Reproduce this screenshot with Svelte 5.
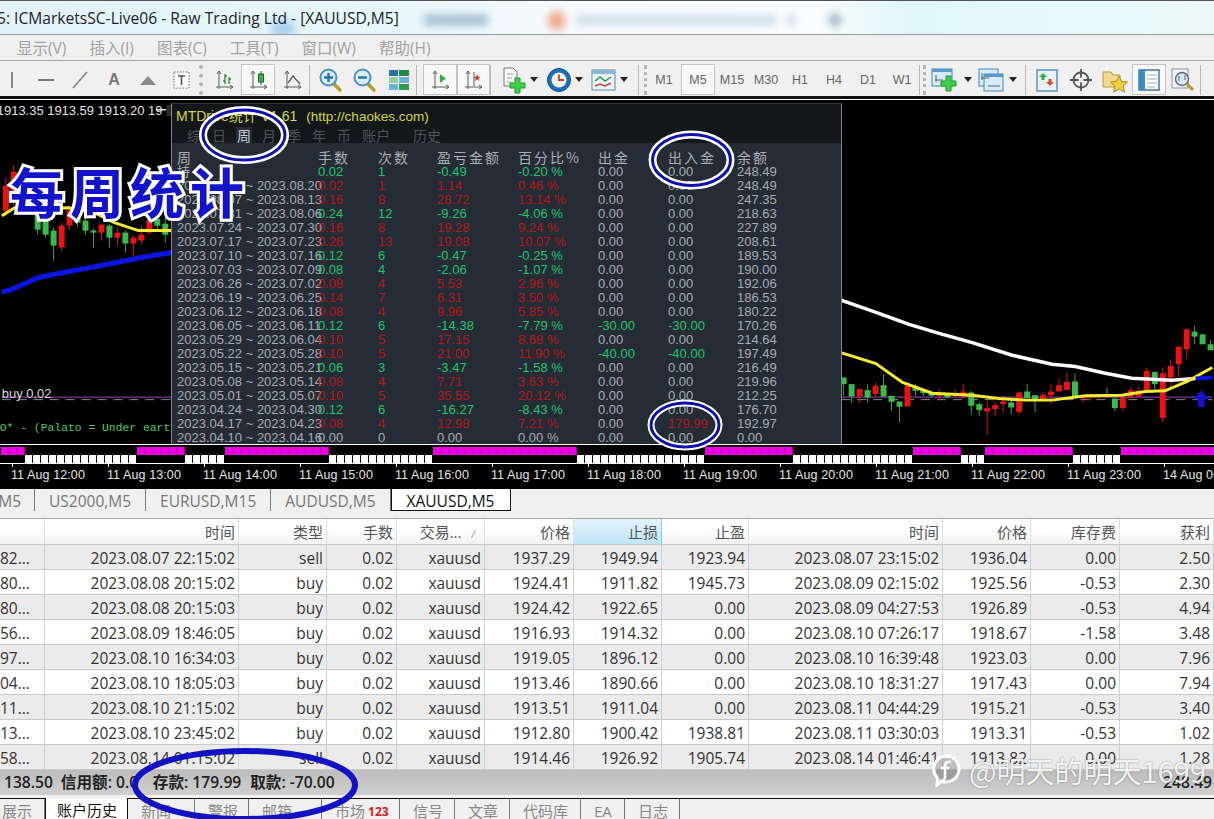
<script>
  const menus = ['显示(V)', '插入(I)', '图表(C)', '工具(T)', '窗口(W)', '帮助(H)'];
  const periods = ['M1', 'M5', 'M15', 'M30', 'H1', 'H4', 'D1', 'W1'];

  // candles on the left of the panel, page coordinates: x, colour, body top/bottom, wick top/bottom
  const leftCandles = [
    [4, 'r', 186, 211, 178, 216], [12, 'r', 172, 200, 165, 206], [36, 'g', 215, 230, 208, 235],
    [44, 'g', 220, 235, 212, 238], [52, 'g', 231, 246, 228, 261], [60, 'r', 226, 248, 223, 251],
    [68, 'r', 211, 226, 206, 230], [76, 'g', 215, 223, 210, 227], [84, 'g', 221, 231, 218, 235],
    [92, 'g', 231, 233, 229, 248], [100, 'r', 225, 233, 224, 241], [108, 'g', 226, 238, 224, 248],
    [116, 'r', 233, 238, 228, 246], [124, 'g', 233, 244, 231, 253], [132, 'r', 238, 244, 236, 256],
    [140, 'r', 235, 241, 226, 245], [148, 'r', 220, 233, 218, 235], [156, 'g', 219, 226, 216, 230],
    [164, 'g', 224, 235, 215, 243]
  ];

  // candles right of the panel, measured on the 3x crop of x=840 y=270
  const rightRaw = [
    [13, 'g', 325, 345, 325, 380], [37, 'g', 345, 382, 345, 402], [61, 'r', 360, 382, 360, 400],
    [85, 'g', 363, 385, 345, 400], [109, 'r', 350, 375, 340, 385], [133, 'g', 348, 382, 315, 385],
    [157, 'g', 380, 398, 380, 425], [181, 'g', 397, 413, 397, 460], [205, 'r', 350, 412, 345, 412],
    [229, 'g', 352, 365, 345, 382], [253, 'g', 362, 372, 362, 380], [277, 'g', 372, 380, 368, 384],
    [301, 'r', 378, 380, 360, 395], [325, 'g', 375, 385, 375, 388], [349, 'r', 375, 380, 362, 385],
    [373, 'r', 367, 382, 345, 385], [397, 'g', 370, 410, 366, 437], [421, 'g', 405, 423, 400, 440],
    [445, 'r', 417, 427, 395, 497], [469, 'r', 408, 420, 400, 440], [493, 'r', 397, 405, 380, 430],
    [517, 'g', 400, 415, 395, 435], [541, 'r', 370, 428, 366, 435], [565, 'g', 367, 387, 345, 387],
    [589, 'g', 378, 390, 378, 430], [613, 'r', 377, 390, 370, 390], [637, 'r', 367, 378, 345, 405],
    [661, 'r', 348, 367, 328, 367], [685, 'r', 338, 362, 310, 362], [709, 'g', 337, 382, 313, 382],
    [733, 'r', 385, 388, 385, 400], [757, 'r', 382, 385, 382, 395], [781, 'r', 378, 382, 378, 390],
    [805, 'g', 378, 380, 355, 382], [829, 'g', 388, 417, 388, 425], [853, 'r', 385, 417, 385, 425],
    [877, 'r', 363, 385, 353, 385], [901, 'r', 365, 382, 352, 385], [925, 'r', 305, 365, 295, 365],
    [949, 'g', 308, 345, 308, 360], [973, 'r', 312, 447, 295, 460], [997, 'r', 290, 325, 270, 360],
    [1021, 'r', 232, 285, 232, 325], [1045, 'r', 180, 240, 175, 268], [1069, 'g', 187, 202, 170, 225],
    [1093, 'g', 195, 225, 195, 225], [1117, 'g', 225, 243, 212, 243]
  ];
  const rightCandles = rightRaw.map(([x, c, a, b, d, e]) => [
    840 + x / 3, c, 270 + a / 3, 270 + b / 3, 270 + d / 3, 270 + e / 3
  ]);
  const candles = [...leftCandles, ...rightCandles];

  const crop = (pts) => pts.map(([x, y]) => `${840 + x / 3},${270 + y / 3}`).join(' ');
  const whiteLine = crop([[5, 92], [100, 125], [210, 165], [300, 192], [400, 220], [520, 258], [640, 285], [710, 292], [800, 312], [880, 327], [1000, 333], [1072, 328]]);
  const yellowRight = crop([[5, 250], [110, 283], [190, 340], [280, 372], [400, 378], [480, 388], [560, 393], [640, 393], [740, 380], [850, 378], [920, 367], [980, 365], [1050, 335], [1122, 295]]);
  const blueEnd = crop([[1072, 328], [1122, 325]]);

  // pink and white activity strip
  const pinkRanges = [[0, 24], [137, 185], [225, 329], [433, 577], [705, 793], [913, 961], [985, 1073], [1121, 1220]];
  const cells = Array.from({ length: 152 }, (_, k) => {
    const x = 1 + 8 * k;
    return pinkRanges.some(([a, b]) => x >= a && x < b);
  });

  const hours = ['11 Aug 12:00', '11 Aug 13:00', '11 Aug 14:00', '11 Aug 15:00', '11 Aug 16:00', '11 Aug 17:00', '11 Aug 18:00', '11 Aug 19:00', '11 Aug 20:00', '11 Aug 21:00', '11 Aug 22:00', '11 Aug 23:00', '14 Aug 00:00'];

  const panelHead = ['周', '手数', '次数', '盈亏金额', '百分比%', '出金', '出入金', '余额'];
  const g = 'g', r = 'r';
  const weeks = [
    ['持', '0.02', '1', '-0.49', '-0.20 %', '0.00', '0.00', '248.49', g],
    ['2023.08.14 ~ 2023.08.20', '0.02', '1', '1.14', '0.46 %', '0.00', '0.00', '248.49', r],
    ['2023.08.07 ~ 2023.08.13', '0.16', '8', '28.72', '13.14 %', '0.00', '0.00', '247.35', r],
    ['2023.07.31 ~ 2023.08.06', '0.24', '12', '-9.26', '-4.06 %', '0.00', '0.00', '218.63', g],
    ['2023.07.24 ~ 2023.07.30', '0.16', '8', '19.28', '9.24 %', '0.00', '0.00', '227.89', r],
    ['2023.07.17 ~ 2023.07.23', '0.26', '13', '19.08', '10.07 %', '0.00', '0.00', '208.61', r],
    ['2023.07.10 ~ 2023.07.16', '0.12', '6', '-0.47', '-0.25 %', '0.00', '0.00', '189.53', g],
    ['2023.07.03 ~ 2023.07.09', '0.08', '4', '-2.06', '-1.07 %', '0.00', '0.00', '190.00', g],
    ['2023.06.26 ~ 2023.07.02', '0.08', '4', '5.53', '2.96 %', '0.00', '0.00', '192.06', r],
    ['2023.06.19 ~ 2023.06.25', '0.14', '7', '6.31', '3.50 %', '0.00', '0.00', '186.53', r],
    ['2023.06.12 ~ 2023.06.18', '0.08', '4', '9.96', '5.85 %', '0.00', '0.00', '180.22', r],
    ['2023.06.05 ~ 2023.06.11', '0.12', '6', '-14.38', '-7.79 %', '-30.00', '-30.00', '170.26', g],
    ['2023.05.29 ~ 2023.06.04', '0.10', '5', '17.15', '8.68 %', '0.00', '0.00', '214.64', r],
    ['2023.05.22 ~ 2023.05.28', '0.10', '5', '21.00', '11.90 %', '-40.00', '-40.00', '197.49', r],
    ['2023.05.15 ~ 2023.05.21', '0.06', '3', '-3.47', '-1.58 %', '0.00', '0.00', '216.49', g],
    ['2023.05.08 ~ 2023.05.14', '0.08', '4', '7.71', '3.63 %', '0.00', '0.00', '219.96', r],
    ['2023.05.01 ~ 2023.05.07', '0.10', '5', '35.55', '20.12 %', '0.00', '0.00', '212.25', r],
    ['2023.04.24 ~ 2023.04.30', '0.12', '6', '-16.27', '-8.43 %', '0.00', '0.00', '176.70', g],
    ['2023.04.17 ~ 2023.04.23', '0.08', '4', '12.98', '7.21 %', '0.00', '179.99', '192.97', r],
    ['2023.04.10 ~ 2023.04.16', '0.00', '0', '0.00', '0.00 %', '0.00', '0.00', '0.00', '']
  ];
  // colour of a panel cell: label and balance stay grey, money columns only when they moved
  function tone(row, i) {
    const v = row[i];
    if (i === 0 || i === 7) return '';
    if (i === 5 || i === 6) {
      if (v === '0.00') return '';
      return v.startsWith('-') ? 'g' : 'r';
    }
    return row[8];
  }

  const chartTabs = ['M5', 'US2000,M5', 'EURUSD,M15', 'AUDUSD,M5'];
  const head = ['', '时间', '类型', '手数', '交易...', '价格', '止损', '止盈', '时间', '价格', '库存费', '获利'];
  const rows = [
    ['82...', '2023.08.07 22:15:02', 'sell', '0.02', 'xauusd', '1937.29', '1949.94', '1923.94', '2023.08.07 23:15:02', '1936.04', '0.00', '2.50'],
    ['80...', '2023.08.08 20:15:02', 'buy', '0.02', 'xauusd', '1924.41', '1911.82', '1945.73', '2023.08.09 02:15:02', '1925.56', '-0.53', '2.30'],
    ['80...', '2023.08.08 20:15:03', 'buy', '0.02', 'xauusd', '1924.42', '1922.65', '0.00', '2023.08.09 04:27:53', '1926.89', '-0.53', '4.94'],
    ['56...', '2023.08.09 18:46:05', 'buy', '0.02', 'xauusd', '1916.93', '1914.32', '0.00', '2023.08.10 07:26:17', '1918.67', '-1.58', '3.48'],
    ['97...', '2023.08.10 16:34:03', 'buy', '0.02', 'xauusd', '1919.05', '1896.12', '0.00', '2023.08.10 16:39:48', '1923.03', '0.00', '7.96'],
    ['04...', '2023.08.10 18:05:03', 'buy', '0.02', 'xauusd', '1913.46', '1890.66', '0.00', '2023.08.10 18:31:27', '1917.43', '0.00', '7.94'],
    ['11...', '2023.08.10 21:15:02', 'buy', '0.02', 'xauusd', '1913.51', '1911.04', '0.00', '2023.08.11 04:44:29', '1915.21', '-0.53', '3.40'],
    ['13...', '2023.08.10 23:45:02', 'buy', '0.02', 'xauusd', '1912.80', '1900.42', '1938.81', '2023.08.11 03:30:03', '1913.31', '-0.53', '1.02'],
    ['58...', '2023.08.14 01:15:02', 'sell', '0.02', 'xauusd', '1914.46', '1926.92', '1905.74', '2023.08.14 01:46:41', '1913.82', '0.00', '1.28']
  ];
  const bottomTabs = [
    { t: '展示', w: 45, pad: 2 }, { t: '账户历史', w: 83, on: true }, { t: '新闻', w: 67 }, { t: '警报', w: 54 },
    { t: '邮箱', w: 73 }, { t: '市场', w: 78, badge: '123' }, { t: '信号', w: 55 }, { t: '文章', w: 55 },
    { t: '代码库', w: 71 }, { t: 'EA', w: 44 }, { t: '日志', w: 55 }
  ];
</script>

{#snippet axes()}
  <path d="M6 2v18M3 18h17M6 2l-2 3M6 2l2 3M20 18l-3-2M20 18l-3 2" stroke="#56605a" fill="none" />
{/snippet}

{#snippet arrow()}
  <svg class="drop" width="8" height="5" viewBox="0 0 8 5"><path d="M0 0h8L4 5z" fill="#222" /></svg>
{/snippet}

{#snippet lens(mark)}
  <svg width="26" height="26" viewBox="0 0 26 26">
    <path d="M15 16l7 7" stroke="#b89a28" stroke-width="3.4" stroke-linecap="round" />
    <circle cx="10.5" cy="10.5" r="8" fill="#d8eefa" stroke="#4a90c8" stroke-width="2" />
    <path d={mark} stroke="#2a6fb0" stroke-width="2.4" fill="none" />
  </svg>
{/snippet}

<div class="screen">
  <header class="titlebar">
    <span class="blur b1"></span><span class="blur b2"></span><span class="blur b3"></span>
    <span class="blur b4"></span><span class="blur b5"></span><span class="blur b6"></span>
    <span class="title">5: ICMarketsSC-Live06 - Raw Trading Ltd - [XAUUSD,M5]</span>
  </header>

  <nav class="menubar">
    {#each menus as m}<span>{m}</span>{/each}
  </nav>

  <div class="toolbar">
    <span class="tool"><svg width="22" height="22" viewBox="0 0 22 22"><path d="M11 3v16" stroke="#888" stroke-width="2" /></svg></span>
    <span class="tool"><svg width="22" height="22" viewBox="0 0 22 22"><path d="M3 11h16" stroke="#777" stroke-width="2" /></svg></span>
    <span class="tool"><svg width="22" height="22" viewBox="0 0 22 22"><path d="M4 19L18 3" stroke="#888" stroke-width="1.6" /></svg></span>
    <span class="tool letter">A</span>
    <span class="tool"><svg width="22" height="22" viewBox="0 0 22 22"><path d="M3 16L11 7l8 9z" fill="#8a8a8a" /></svg></span>
    <span class="tool"><svg width="22" height="22" viewBox="0 0 22 22"><rect x="3" y="3" width="15" height="16" fill="#fff" stroke="#666" stroke-dasharray="1.5 1.5" /><path d="M7 7h7M10.5 7v9" stroke="#555" stroke-width="1.6" /></svg></span>
    <span class="grip"></span>

    <span class="tool"><svg width="22" height="22" viewBox="0 0 22 22">{@render axes()}<path d="M12 5v10M12 7h2M10 12h2M16 8v7M16 10h2" stroke="#2c8a2c" stroke-width="1.3" fill="none" /></svg></span>
    <span class="tool on"><svg width="22" height="22" viewBox="0 0 22 22">{@render axes()}<path d="M14 2v14" stroke="#264" /><rect x="11.5" y="5" width="5" height="8" fill="#3fb03f" stroke="#264" /></svg></span>
    <span class="tool"><svg width="22" height="22" viewBox="0 0 22 22">{@render axes()}<path d="M7 14l5-7 7 8" stroke="#555" stroke-width="1.3" fill="none" /></svg></span>
    <span class="sep"></span>

    <span class="tool">{@render lens('M6 10.5h9M10.5 6v9')}</span>
    <span class="tool">{@render lens('M6 10.5h9')}</span>
    <span class="tool"><svg width="22" height="22" viewBox="0 0 22 22"><rect x="1" y="1" width="20" height="20" fill="#fff" /><rect x="1" y="1" width="9" height="6" fill="#2c6f9e" /><rect x="11" y="1" width="10" height="6" fill="#1f8a4a" /><rect x="1" y="8" width="9" height="6" fill="#8fd09a" /><rect x="11" y="8" width="10" height="6" fill="#6ab2dc" /><rect x="1" y="15" width="9" height="6" fill="#6ab2dc" /><rect x="11" y="15" width="10" height="6" fill="#2d9a4c" /></svg></span>
    <span class="sep wide"></span>

    <span class="tool narrow on"><svg width="22" height="22" viewBox="0 0 22 22">{@render axes()}<path d="M11 5l6 4.5-6 4.5z" fill="#2fae4a" /></svg></span>
    <span class="tool narrow on"><svg width="22" height="22" viewBox="0 0 22 22">{@render axes()}<path d="M12 3v14" stroke="#56605a" /><path d="M15 5l1 2.5 2.5.5-2 1.500.5 2.500-2-1.500-2 1.500.5-2.500-2-1.500 2.500-.5z" fill="#d0402c" /></svg></span>
    <span class="sep"></span>

    <span class="dropper">
      <svg width="28" height="28" viewBox="0 0 28 28"><path d="M4 2h9l4 4v14H4z" fill="#f6f6f6" stroke="#777" /><path d="M7 8h6M7 12h5M7 16h4" stroke="#999" /><path d="M15 12h5v5h5v5h-5v5h-5v-5h-5v-5h5z" fill="#3fcf4a" stroke="#1f9a2f" /></svg>
      {@render arrow()}
    </span>
    <span class="dropper">
      <svg width="28" height="28" viewBox="0 0 28 28"><circle cx="14" cy="14" r="11.5" fill="#1a70b8" stroke="#0f4f88" /><circle cx="14" cy="14" r="7.5" fill="#f4f4ea" /><path d="M14 8.500V14h5" stroke="#c04a20" stroke-width="1.8" fill="none" /></svg>
      {@render arrow()}
    </span>
    <span class="dropper">
      <svg width="28" height="28" viewBox="0 0 28 28"><rect x="2" y="4" width="23" height="20" fill="#eaf4fa" stroke="#5a86a8" /><rect x="2" y="4" width="23" height="4" fill="#8ab8d8" /><path d="M5 15l5-4 5 4 6-4" stroke="#2c9a3c" stroke-width="1.5" fill="none" /><path d="M5 20l5-2 5 2 6-3" stroke="#c0443a" stroke-width="1.5" fill="none" /></svg>
      {@render arrow()}
    </span>
    <span class="sep gripped"></span>

    {#each periods as p}
      <span class="tool period" class:on={p === 'M5'}>{p}</span>
    {/each}
    <span class="sep gripped2"></span>

    <span class="dropper tight">
      <svg width="30" height="28" viewBox="0 0 30 28"><rect x="2" y="3" width="20" height="17" fill="#d8ecf8" stroke="#4a86b0" /><rect x="2" y="3" width="20" height="3" fill="#5a9ac8" /><path d="M6 9v7M5 14h8" stroke="#567" /><path d="M16 10h5v5h5v5h-5v5h-5v-5h-5v-5h5z" fill="#3fcf4a" stroke="#1f9a2f" /></svg>
      {@render arrow()}
    </span>
    <span class="dropper tight">
      <svg width="28" height="28" viewBox="0 0 28 28"><rect x="2" y="3" width="19" height="17" fill="#d8ecf8" stroke="#4a86b0" /><rect x="7" y="8" width="19" height="17" fill="#d8ecf8" stroke="#4a86b0" /><rect x="7" y="8" width="19" height="3" fill="#5a9ac8" /><path d="M5 7v7M4 12h8M11 20h12" stroke="#567" /></svg>
      {@render arrow()}
    </span>
    <span class="sep far"></span>

    <span class="tool"><svg width="24" height="24" viewBox="0 0 24 24"><rect x="2" y="2" width="20" height="21" fill="#e8f2f8" stroke="#5a92bc" stroke-width="1.5" /><path d="M8 5l4 4H9.500v3h-3V9H4z" fill="#2fae4a" /><path d="M15 18l-4-4h2.500v-3h3v3H19z" fill="#d0502c" /></svg></span>
    <span class="tool"><svg width="24" height="24" viewBox="0 0 24 24"><circle cx="12" cy="12" r="7.5" fill="none" stroke="#555" stroke-width="1.8" /><path d="M12 1v22M1 12h22" stroke="#555" stroke-width="1.8" /><circle cx="12" cy="12" r="2.5" fill="#f0f0f0" /></svg></span>
    <span class="tool"><svg width="26" height="26" viewBox="0 0 26 26"><path d="M1 5h8l2 3h7v12H1z" fill="#f0d890" stroke="#b89a40" /><path d="M17 9l2.500 5.500 6 .5-4.500 4 1.500 6-5.500-3-5.500 3 1.500-6-4.500-4 6-.5z" fill="#f4d040" stroke="#a88a20" /></svg></span>
    <span class="tool on"><svg width="24" height="24" viewBox="0 0 24 24"><rect x="2" y="2" width="20" height="20" fill="#f8fbff" stroke="#3a7ab0" stroke-width="1.5" /><rect x="2" y="2" width="6" height="20" fill="#3a8ac8" /><path d="M10 7h10M10 11h10M10 15h10M10 19h8" stroke="#aab" /></svg></span>
    <span class="tool"><svg width="26" height="26" viewBox="0 0 26 26"><rect x="2" y="2" width="16" height="19" fill="#eef2f6" stroke="#8a9aa8" /><circle cx="12" cy="12" r="6.5" fill="#d8eaf6" stroke="#667" stroke-width="1.4" /><path d="M9 9v5M15 8v5" stroke="#567" /><path d="M17 17l6 6" stroke="#b89a28" stroke-width="3" /></svg></span>
    <span class="sep"></span>
  </div>

  <section class="chart">
    <svg class="plot" width="1214" height="345" viewBox="0 100 1214 345">
      <path d="M0 398H171M842 398H1214" stroke="#a63fc4" stroke-width="1" />
      <path d="M0 400.5H171M842 400.5H1214" stroke="#8a8a8a" stroke-dasharray="9 7" />
      {#each candles as [x, c, top, bot, wt, wb]}
        <path d="M{x} {wt}V{wb}" stroke={c === 'g' ? '#33a84a' : '#d81818'} />
        <rect x={x - 3} y={top} width="6" height={Math.max(bot - top, 1)} fill={c === 'g' ? '#3cb84c' : '#e81414'} />
      {/each}
      <polyline points="0,216 13,208 40,209 67,208 93,213 113,223 137,231 171,231" fill="none" stroke="#f2ec2e" stroke-width="3" />
      <polyline points="0,293 10,290 37,278 67,272 100,266 140,258 171,253" fill="none" stroke="#0c14e0" stroke-width="5" />
      <polyline points={whiteLine} fill="none" stroke="#fff" stroke-width="3.5" />
      <polyline points={yellowRight} fill="none" stroke="#f2ec2e" stroke-width="3" />
      <polyline points={blueEnd} fill="none" stroke="#0c14e0" stroke-width="4" />
      <path d="M1203 391l8 9h-4.500v8h-7v-8H1195z" fill="#1414d0" />
      <text class="ohlc" x="-5" y="115">1913.35 1913.59 1913.20 19</text>
      <rect x="155" y="109" width="10" height="1.5" fill="#e0e0e0" />
      <rect x="165" y="105" width="6" height="11" fill="#2a2a2a" />
      <text class="buy" x="0" y="399">buy 0.02</text>
      <text class="note" x="-2" y="432">O* - (Palato = Under earth</text>
    </svg>

    <div class="strip">
      {#each cells as pink}
        <span class="cell" class:pink></span>
      {/each}
    </div>

    <div class="axis">
      {#each hours as h}
        <span class="hour">{h}</span>
      {/each}
    </div>

    <div class="panel">
      <div class="panel-top">
        <div class="panel-title">MTDrive统计 V1.61<span class="link">(http://chaokes.com)</span></div>
        <div class="panel-tabs">
          <span>综</span><span>日</span><span class="cur">周</span><span>月</span><span>季</span><span>年</span><span>币</span><span>账户</span><span class="last">历史</span>
        </div>
      </div>
      <div class="panel-body">
        <div class="prow phead">
          {#each panelHead as h}<span>{h}</span>{/each}
        </div>
        {#each weeks as w}
          <div class="prow">
            {#each w.slice(0, 8) as v, i}
              <span class={tone(w, i)}>{v}</span>
            {/each}
          </div>
        {/each}
      </div>
    </div>

    <div class="stamp">每周统计</div>
  </section>

  <div class="charttabs">
    {#each chartTabs as t}<span class="ctab">{t}</span>{/each}
    <span class="ctab active">XAUUSD,M5</span>
  </div>

  <div class="grid-head line">
    {#each head as h, i}
      <span class:sorted={i === 6}>{h}{#if i === 4}<i class="sortmark">/</i>{/if}</span>
    {/each}
  </div>
  {#each rows as row, n}
    <div class="line" class:odd={n % 2 === 0}>
      {#each row as v, i}<span class:first={i === 0}>{v}</span>{/each}
    </div>
  {/each}

  <div class="status">
    <span class="s1">138.50</span>
    <span class="s2">信用额: 0.00</span>
    <span class="s3">存款: 179.99</span>
    <span class="s4">取款: -70.00</span>
    <span class="s5">248.49</span>
  </div>

  <div class="bottomtabs">
    {#each bottomTabs as t}
      <span class="btab" class:on={t.on} style="width:{t.w}px;padding-left:{t.pad ?? 13}px">{t.t}{#if t.badge}<b>{t.badge}</b>{/if}</span>
    {/each}
  </div>

  <svg class="rings" width="1214" height="819" viewBox="0 0 1214 819">
    <ellipse cx="244" cy="135" rx="41" ry="25" fill="none" stroke="#fff" stroke-width="8" />
    <ellipse cx="244" cy="135" rx="41" ry="25" fill="none" stroke="#1010b0" stroke-width="3" />
    <ellipse cx="691.5" cy="160" rx="39" ry="25.5" fill="none" stroke="#fff" stroke-width="8" />
    <ellipse cx="691.5" cy="160" rx="39" ry="25.5" fill="none" stroke="#1010b0" stroke-width="3" />
    <ellipse cx="685" cy="425" rx="34" ry="22" fill="none" stroke="#fff" stroke-width="7" />
    <ellipse cx="685" cy="425" rx="34" ry="22" fill="none" stroke="#1010b0" stroke-width="3" />
    <ellipse cx="245" cy="785" rx="110" ry="34" fill="none" stroke="#1212c4" stroke-width="6" />
  </svg>

  <div class="mark">
    <svg width="32" height="34" viewBox="0 0 32 34">
      <path d="M16 3a13 13 0 1 1-5 25l-4 4 .5-7A13 13 0 0 1 16 3z" fill="rgba(60,60,60,.25)" stroke="#fff" stroke-width="3" />
      <path d="M21 9c-4-1-6 1-6 4v11c0 3-2 4-4 3M11 15h8" fill="none" stroke="#fff" stroke-width="2.5" />
    </svg>
    <span>@明天的明天1699</span>
  </div>
</div>

<style>
  :global(body) {
    margin: 0;
    background: #f0f0f0;
  }

  .screen {
    position: relative;
    width: 1214px;
    height: 819px;
    overflow: hidden;
    font-family: "Open Sans", "Noto Sans CJK SC", sans-serif;
    color: #333;
  }

  .titlebar {
    position: relative;
    height: 35px;
    box-sizing: border-box;
    border-top: 1px solid #555;
    border-bottom: 1px solid #999;
    overflow: hidden;
    background: linear-gradient(90deg, #e4f3fb 0, #e6f6fc 30%, #f5fbfd 45%, #fbfcfd 67%, #e0f7f8 75%, #e6fbfb 88%, #eef8f8 100%);
  }

  .title {
    position: absolute;
    left: -3px;
    top: 6px;
    font-size: 15.6px;
    line-height: 22px;
    color: #222;
    white-space: nowrap;
  }

  .blur {
    position: absolute;
    filter: blur(4px);
  }
  .b1 { left: 272px; top: 20px; width: 22px; height: 16px; background: #a8cfee; }
  .b2 { left: 424px; top: 14px; width: 64px; height: 10px; background: #9db8cc; }
  .b3 { left: 548px; top: 10px; width: 17px; height: 19px; border-radius: 50%; background: #f0a284; }
  .b4 { left: 576px; top: 15px; width: 200px; height: 8px; background: #c5d6e2; }
  .b5 { left: 788px; top: 15px; width: 7px; height: 8px; background: #b6cad8; }
  .b6 { left: 829px; top: 13px; width: 12px; height: 12px; border-radius: 50%; background: #8fa6c0; }

  .menubar {
    display: flex;
    gap: 23px;
    height: 26px;
    box-sizing: border-box;
    padding-left: 17px;
    align-items: center;
    background: #f0f0f0;
    border-bottom: 1px solid #aaa;
    font-size: 15.5px;
    color: #a2a2a2;
  }

  .toolbar {
    display: flex;
    align-items: center;
    height: 35px;
    margin-left: -5px;
    width: 1230px;
    background: #f0f0f0;
    box-sizing: border-box;
    padding-top: 2px;
  }

  .tool {
    flex: none;
    display: flex;
    align-items: center;
    justify-content: center;
    width: 34px;
    height: 31px;
    box-sizing: border-box;
  }
  .tool.narrow { width: 33.5px; }
  .tool.on {
    background: #f8f8f8;
    box-shadow: inset 0 0 0 1px #c4c4c4;
  }
  .letter {
    font: bold 16px "Liberation Sans", sans-serif;
    color: #777;
  }
  .period {
    font: 12.5px "Liberation Sans", sans-serif;
    color: #666;
  }

  .grip {
    flex: none;
    width: 8px;
    height: 30px;
    border-left: 4px dotted #b4b4b4;
    box-sizing: border-box;
  }
  .sep {
    flex: none;
    width: 5px;
    height: 30px;
    box-sizing: border-box;
    border-left: 1px solid #b8b8b8;
  }
  .sep.wide { width: 7px; }
  .sep.gripped { width: 9px; margin-left: 8px; border-right: 3px dotted #b4b4b4; }
  .sep.gripped2 { width: 7px; border-right: 3px dotted #b4b4b4; }
  .sep.far { width: 5px; margin-left: 5px; }

  .dropper {
    flex: none;
    display: flex;
    align-items: center;
    width: 45px;
    padding-left: 5px;
    box-sizing: border-box;
    gap: 2px;
  }
  .dropper.tight { width: 47px; padding-left: 4px; gap: 4px; }

  .chart {
    position: relative;
    height: 393px;
    box-sizing: border-box;
    background: #000;
    border-top: 3px solid #111;
    box-shadow: inset 0 1px 0 #555;
  }
  .plot {
    display: block;
    border-top: 1px solid #fff;
    height: 344px;
    border-bottom: 1px solid #fff;
  }
  .ohlc {
    font: 13px "Liberation Sans", sans-serif;
    fill: #e0e0e0;
  }
  .buy {
    font: 13px "Liberation Sans", sans-serif;
    fill: #d8d8d8;
  }
  .note {
    font: 11.4px "Liberation Mono", monospace;
    fill: #4fc862;
  }

  .strip {
    display: flex;
    align-items: flex-start;
    height: 19px;
    padding-left: 1px;
    padding-top: 2px;
    box-sizing: border-box;
    overflow: hidden;
    border-bottom: 1px solid #fff;
  }
  .cell {
    flex: none;
    width: 7px;
    height: 8px;
    margin-right: 1px;
    margin-top: 8px;
    background: #fff;
  }
  .cell.pink {
    margin-top: 0;
    background: #f000e4;
    box-shadow: 1px 0 0 #a800a0;
  }

  .axis {
    display: flex;
    padding-left: 11px;
    height: 24px;
    background: #000;
    white-space: nowrap;
  }
  .hour {
    position: relative;
    flex: none;
    width: 96px;
    padding-top: 3px;
    font: 12.5px/16px "Liberation Sans", sans-serif;
    letter-spacing: 0.1px;
    color: #e4e4e4;
  }
  .hour::before {
    content: '';
    position: absolute;
    left: 1px;
    top: 0;
    width: 1px;
    height: 3px;
    background: #fff;
  }

  .panel {
    position: absolute;
    left: 171px;
    top: 4px;
    width: 671px;
    height: 341px;
    box-sizing: border-box;
    border: 1px solid #7d8791;
    border-top-color: #333;
    border-bottom: 0;
    background: #262c35;
    overflow: hidden;
  }
  .panel-top {
    height: 39px;
    background: #14171a;
    position: relative;
  }
  .panel-title {
    padding: 3px 0 0 4px;
    font: 14px/18px "Liberation Sans", "Noto Sans CJK SC", sans-serif;
    color: #d6d63c;
    white-space: nowrap;
  }
  .link {
    margin-left: 9px;
    font-size: 13.5px;
  }
  .panel-tabs {
    display: flex;
    gap: 11px;
    padding: 1px 0 0 15px;
    font: 14px/17px "Noto Sans CJK SC", sans-serif;
    color: #4e5358;
  }
  .panel-tabs .cur {
    color: #c8ced4;
    background: #262c35;
    margin: 0 -1px;
    padding: 0 1px 3px;
  }
  .panel-tabs .last {
    margin-left: 12px;
  }

  .panel-body {
    padding: 7px 0 0 5px;
    font: 13px/14px "Liberation Sans", "Noto Sans CJK SC", sans-serif;
    color: #a4acb4;
  }
  .prow {
    display: grid;
    grid-template-columns: 141px 60px 59px 81px 80px 70px 69px 1fr;
    height: 14px;
    white-space: nowrap;
  }
  .prow span {
    min-width: 0;
  }
  .phead {
    height: 15px;
    font: 14px/15px "Noto Sans CJK SC", sans-serif;
    letter-spacing: 2px;
    color: #a8afb6;
  }
  .g { color: #1fc46e; }
  .r { color: #b01a1c; }

  .stamp {
    position: absolute;
    left: 10px;
    top: 57px;
    font: 700 54px/70px "Noto Sans CJK SC", sans-serif;
    letter-spacing: 6px;
    color: #1313cc;
    -webkit-text-stroke: 6px #fff;
    paint-order: stroke fill;
    white-space: nowrap;
  }

  .charttabs {
    display: flex;
    height: 30px;
    box-sizing: border-box;
    background: #f0f0f0;
    border-top: 1px solid #111;
    font-size: 15.5px;
    color: #777;
    margin-top: -1px;
  }
  .ctab {
    display: flex;
    align-items: center;
    height: 22px;
    padding: 2px 14px 0;
    box-sizing: border-box;
    border-right: 1px solid #777;
    white-space: nowrap;
  }
  .ctab:first-child {
    width: 35px;
    padding: 2px 13px 0 0;
    justify-content: flex-end;
    overflow: hidden;
  }
  .ctab.active {
    height: 23px;
    width: 120px;
    margin-top: -1px;
    justify-content: center;
    padding: 2px 0 0;
    color: #111;
    background: #fff;
    border: 1px solid #111;
  }

  .line {
    display: grid;
    grid-template-columns: 45px 194px 88px 70px 88px 89px 88px 87px 194px 88px 89px 94px;
    height: 25px;
    box-sizing: border-box;
    border-bottom: 1px solid #c8c8c8;
    background: #fff;
    font-size: 15.5px;
    line-height: 26px;
    color: #333;
    white-space: nowrap;
  }
  .line.odd {
    background: #ebebeb;
  }
  .line span {
    box-sizing: border-box;
    padding-right: 3px;
    border-right: 1px solid #d0d0d0;
    text-align: right;
    overflow: hidden;
    min-width: 0;
  }
  .line span.first {
    text-align: left;
    padding: 0;
  }
  .grid-head {
    height: 27px;
    border-top: 1px solid #a8a8a8;
    background: linear-gradient(#fff 0, #fff 40%, #f2f2f2 100%);
    color: #555;
    font-size: 15px;
    line-height: 27px;
  }
  .grid-head span {
    border-right-color: #e0e0e0;
  }
  .grid-head .sorted {
    background: linear-gradient(#e4f4fb 0, #bfe5f8 100%);
    border-right: 1px solid #88c8e8;
  }
  .sortmark {
    margin-left: 10px;
    margin-right: 6px;
    font-size: 10px;
    color: #999;
  }

  .status {
    position: relative;
    display: flex;
    height: 25px;
    padding-bottom: 2px;
    box-sizing: border-box;
    align-items: center;
    background: linear-gradient(#bdbdbd, #cfcfcf);
    font-size: 15.6px;
    font-weight: 600;
    color: #222;
    white-space: nowrap;
  }
  .s1 { margin-left: 4px; }
  .s2 { margin-left: 8px; width: 77px; overflow: hidden; }
  .s3 { margin-left: 15px; }
  .s4 { margin-left: 9px; }
  .s5 { margin-left: auto; margin-right: 2px; }

  .bottomtabs {
    display: flex;
    height: 20px;
    margin-top: 3px;
    border-top: 1px solid #111;
    background: #f0f0f0;
    font-size: 15px;
    color: #888;
  }
  .btab {
    flex: none;
    box-sizing: border-box;
    display: flex;
    line-height: 24px;
    border-right: 1px solid #777;
    white-space: nowrap;
  }
  .btab.on {
    color: #111;
    background: #fff;
    border-right-color: #111;
    border-left: 1px solid #111;
    margin-top: -1px;
    padding-left: 11px !important;
  }
  .btab b {
    margin-left: 3px;
    font-size: 12px;
    color: #d82020;
    align-self: flex-end;
    line-height: 14px;
  }

  .rings {
    position: absolute;
    left: 0;
    top: 0;
    pointer-events: none;
  }

  .mark {
    position: absolute;
    left: 930px;
    top: 752px;
    display: flex;
    align-items: center;
    gap: 7px;
    font: 29px/36px "Noto Sans CJK SC", sans-serif;
    color: rgba(255, 255, 255, 0.9);
    text-shadow: 0 0 2px rgba(60, 60, 60, 0.55);
    white-space: nowrap;
  }
</style>
